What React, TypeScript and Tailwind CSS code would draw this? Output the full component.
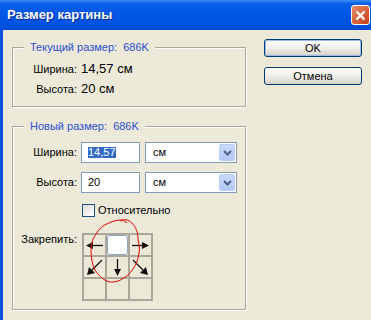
import React from "react";

// Диалог «Размер картины» (стиль Windows XP)

function Arrow({ d, head }: { d: string; head: string }) {
  return (
    <svg width="21" height="21" viewBox="0 0 21 21">
      <path d={d} stroke="#111" strokeWidth="1.3" fill="none" />
      <polygon points={head} fill="#111" />
    </svg>
  );
}

function Chevron() {
  return (
    <svg width="9" height="6" viewBox="0 0 9 6">
      <path d="M1 1 L4.5 4.5 L8 1" stroke="#4D6185" strokeWidth="2" fill="none" />
    </svg>
  );
}

function UnitSelect() {
  return (
    <div className="w-[92px] h-[21px] border border-[#7F9DB9] bg-white flex items-center justify-between pl-[7px] p-[1px]">
      <span className="text-[11px] leading-none">см</span>
      <div className="w-[16px] h-[17px] rounded-[2px] border border-[#B9CCF6] bg-gradient-to-b from-[#C9DAFC] to-[#B3C8F6] flex items-center justify-center">
        <Chevron />
      </div>
    </div>
  );
}

function GroupBox({
  title,
  className,
  children,
}: {
  title: string;
  className: string;
  children: React.ReactNode;
}) {
  return (
    <div
      className={`relative border border-[#ACA899] shadow-[1px_1px_0_#fff,inset_1px_1px_0_#fff] ${className}`}
    >
      <span className="absolute -top-[7px] left-[11px] px-[6px] bg-[#ECE9D8] text-[11px] leading-[13px] text-[#2B50D2] whitespace-pre">
        {title}
      </span>
      {children}
    </div>
  );
}

export default function App() {
  const cells = [
    <Arrow key="tl" d="M7 10.5 H19" head="2,10.5 9,7 9,14" />,
    <div key="tc" className="w-full h-full bg-white border border-[#8FA8C8] rounded-[3px]" />,
    <Arrow key="tr" d="M2 10.5 H14" head="19,10.5 12,7 12,14" />,
    <Arrow key="ml" d="M18 3 L8 13" head="3,18 5,10 11,16" />,
    <Arrow key="mc" d="M10.5 2 V14" head="10.5,19 7,12 14,12" />,
    <Arrow key="mr" d="M3 3 L13 13" head="18,18 10,16 16,10" />,
    <div key="b1" />,
    <div key="b2" />,
    <div key="b3" />,
  ];

  return (
    <div className="w-[371px] h-[320px] overflow-hidden bg-[#ECE9D8] font-['Liberation_Sans',Arial,sans-serif] text-black">
      {/* заголовок окна */}
      <div className="h-[30px] flex items-center justify-between pl-[7px] pr-[1px] bg-[linear-gradient(to_bottom,#3D8DF6_0%,#0B5FEA_12%,#0056E6_50%,#0052E0_88%,#0346D0_100%)]">
        <span className="text-white font-bold text-[13px] [text-shadow:1px_1px_0_#0A2C8C]">
          Размер картины
        </span>
        <div className="w-[19px] h-[20px] rounded-[3px] border border-white bg-gradient-to-br from-[#E98A66] to-[#C43D14] flex items-center justify-center">
          <svg width="11" height="11" viewBox="0 0 11 11">
            <path d="M1.5 1.5 L9.5 9.5 M9.5 1.5 L1.5 9.5" stroke="#fff" strokeWidth="2.2" />
          </svg>
        </div>
      </div>

      <div className="h-[290px] flex border-l-[3px] border-[#0D4FE0]">
        {/* левая колонка */}
        <div className="pl-[9px] pt-[17px] flex flex-col">
          <GroupBox title="Текущий размер:  686K" className="w-[234px] h-[60px]">
            <div className="grid grid-cols-[64px_auto] gap-x-[4px] pt-[11px]">
              <span className="text-[11px] h-[20px] flex items-center justify-end">Ширина:</span>
              <span className="text-[13px] h-[20px] flex items-center">14,57 см</span>
              <span className="text-[11px] h-[20px] flex items-center justify-end">Высота:</span>
              <span className="text-[13px] h-[20px] flex items-center">20 см</span>
            </div>
          </GroupBox>

          <GroupBox title="Новый размер:  686K" className="w-[234px] h-[184px] mt-[19px]">
            <div className="grid grid-cols-[64px_auto] gap-x-[4px] pt-[15px] items-center">
              <span className="text-[11px] text-right">Ширина:</span>
              <div className="flex gap-[5px]">
                <div className="w-[59px] h-[21px] border border-[#7F9DB9] bg-white flex items-center pl-[6px]">
                  <span className="bg-[#316AC5] text-white text-[11px] leading-[11px]">14,57</span>
                </div>
                <UnitSelect />
              </div>

              <span className="text-[11px] text-right mt-[9px]">Высота:</span>
              <div className="flex gap-[5px] mt-[9px]">
                <div className="w-[59px] h-[21px] border border-[#7F9DB9] bg-white flex items-center pl-[6px]">
                  <span className="text-[11px] leading-[11px]">20</span>
                </div>
                <UnitSelect />
              </div>

              <span />
              <div className="flex items-center gap-[3px] mt-[11px] ml-[1px]">
                <div className="w-[13px] h-[13px] border border-[#1C5180] bg-gradient-to-br from-[#DCDBD5] to-white" />
                <span className="text-[11px] leading-[13px]">Относительно</span>
              </div>

              <span className="text-[11px] leading-[13px] text-right self-start mt-[16px]">Закрепить:</span>
              <div className="relative mt-[16px] ml-[1px] w-fit">
                <div className="grid grid-cols-[21px_21px_21px] grid-rows-[20px_20px_20px] gap-[2px] p-[2px] bg-[#ACA899]">
                  {cells.map((c, i) => (
                    <div key={i} className="bg-[#ECE9D8] flex items-center justify-center">
                      {c}
                    </div>
                  ))}
                </div>
                {/* пометка красным от руки */}
                <svg
                  className="absolute left-0 top-0 overflow-visible pointer-events-none"
                  width="71"
                  height="68"
                  viewBox="0 0 71 68"
                >
                  <path
                    d="M38 -12 C42 -14 46 -14 50 -10 C54 -6 56 0 56 6 C57 12 58 16 57 20 C56 27 54 32 51 36 C48 41 44 44 40 46 C36 49 32 49 28 49 C22 48 17 43 13 37 C10 31 9 25 9 17 C9 10 11 5 14 1 C17 -4 21 -8 27 -10 C31 -12 35 -13 40 -13 C42 -12 44 -11 45 -10"
                    stroke="#E00000"
                    strokeWidth="1"
                    fill="none"
                  />
                </svg>
              </div>
            </div>
          </GroupBox>
        </div>

        {/* кнопки */}
        <div className="pl-[18px] pt-[9px] flex flex-col gap-[10px]">
          <button className="w-[98px] h-[18px] rounded-[3px] border border-[#003C74] bg-gradient-to-b from-white via-[#F0F0EA] to-[#D6D0C5] shadow-[inset_0_0_0_1px_#9DB9EB] text-[11px] leading-none">
            OK
          </button>
          <button className="w-[98px] h-[18px] rounded-[3px] border border-[#003C74] bg-gradient-to-b from-white via-[#F0F0EA] to-[#D6D0C5] text-[11px] leading-none">
            Отмена
          </button>
        </div>
      </div>
    </div>
  );
}
